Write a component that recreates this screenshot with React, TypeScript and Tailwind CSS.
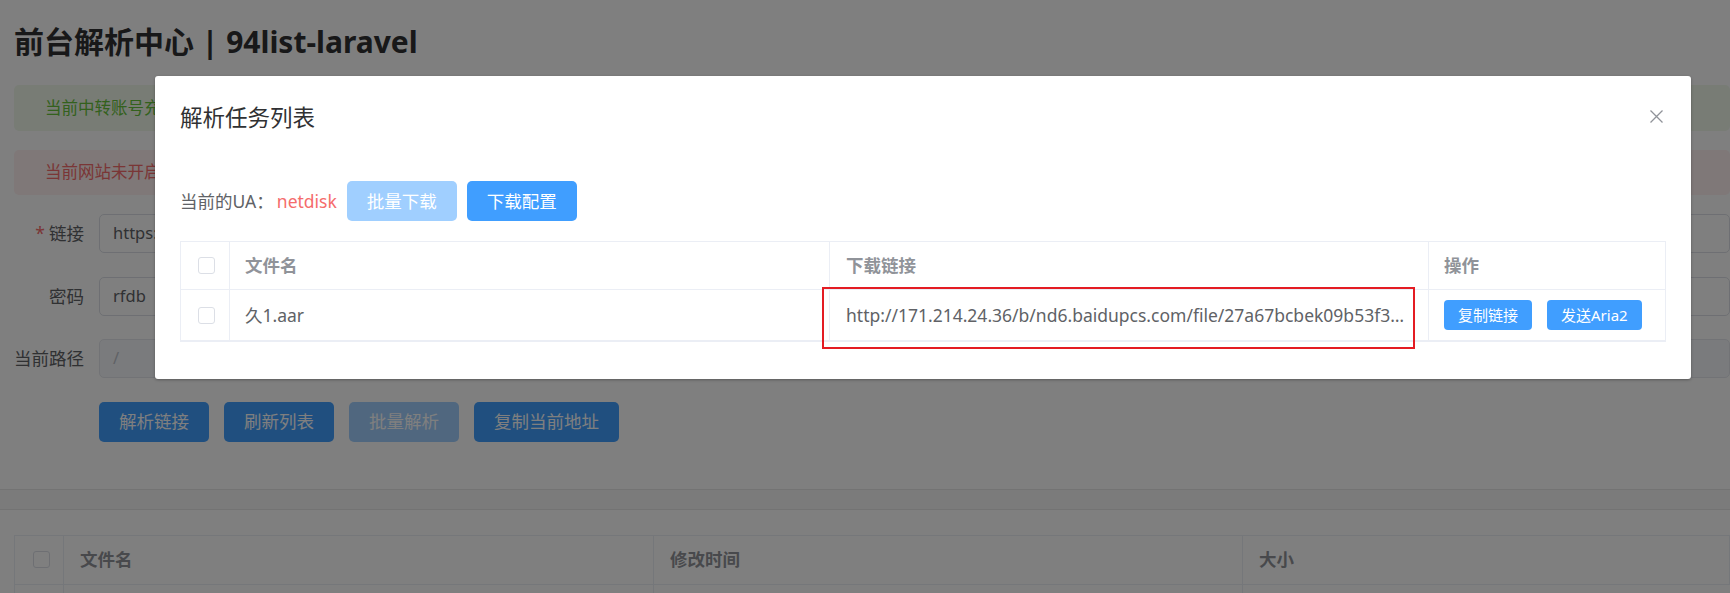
import React from "react";

type Col = { label: string; width: string };

const backCols: Col[] = [
  { label: "文件名", width: "w-[590px]" },
  { label: "修改时间", width: "w-[589px]" },
  { label: "大小", width: "flex-1" },
];

function Box({ className = "" }: { className?: string }) {
  return <span className={`block h-[17px] w-[17px] rounded-[3px] border border-[#dcdfe6] bg-white ${className}`} />;
}

function FormRow({ label, required, children }: { label: string; required?: boolean; children: React.ReactNode }) {
  return (
    <div className="flex h-[39px] items-center">
      <label className="w-[85px] shrink-0 pr-[15px] text-right text-[17.5px] text-[#606266]">
        {required && <span className="mr-[4px] text-[#f56c6c]">*</span>}
        {label}
      </label>
      {children}
    </div>
  );
}

function Page() {
  return (
    <div>
      <div className="pl-[14px] pb-[47px]">
        <h1 className="mt-[22px] h-[40px] text-[30px] font-bold leading-[40px] text-[#303133]">
          前台解析中心 | 94list-laravel
        </h1>

        <div className="mt-[23px] flex h-[46px] items-center rounded-[5px] bg-[#f0f9eb] pl-[31px] text-[16.5px] text-[#67c23a]">
          当前中转账号充足，可正常解析
        </div>
        <div className="mt-[19px] flex h-[45px] items-center rounded-[5px] bg-[#fef0f0] pl-[31px] text-[16.5px] text-[#f56c6c]">
          当前网站未开启卡密验证，请勿泄露网站地址
        </div>

        <div className="mt-[19px] flex flex-col gap-[23.5px]">
          <FormRow label="链接" required>
            <div className="flex h-[39px] flex-1 items-center rounded-[5px] border border-[#dcdfe6] px-[13px] text-[16.5px] text-[#606266]">
              https://pan.baidu.com/s/1xY7kPq2
            </div>
          </FormRow>
          <FormRow label="密码">
            <div className="flex h-[39px] flex-1 items-center rounded-[5px] border border-[#dcdfe6] px-[13px] text-[16.5px] text-[#606266]">
              rfdb
            </div>
          </FormRow>
          <FormRow label="当前路径">
            <div className="flex h-[39px] flex-1 items-center rounded-[5px] border border-[#e4e7ed] bg-[#f5f7fa] px-[13px] text-[16.5px] text-[#c0c4cc]">
              /
            </div>
          </FormRow>
          <div className="flex gap-[15px] pl-[85px]">
            {["解析链接", "刷新列表", "批量解析", "复制当前地址"].map((t) => (
              <button
                key={t}
                className={`h-[40px] rounded-[5px] px-[20px] text-[17.5px] text-white ${t === "批量解析" ? "bg-[#a0cfff]" : "bg-[#409eff]"}`}
              >
                {t}
              </button>
            ))}
          </div>
        </div>
      </div>

      <div className="h-[21px] border-y border-[#e6e6e6] bg-[#f6f6f6]" />

      <div className="pl-[14px] pt-[25px]">
        <div className="border-l border-t border-[#ebeef5]">
          <div className="flex h-[49px] border-b border-[#ebeef5]">
            <div className="flex w-[49px] shrink-0 items-center border-r border-[#ebeef5] pl-[18px]">
              <Box />
            </div>
            {backCols.map((c) => (
              <div
                key={c.label}
                className={`flex ${c.width} shrink-0 items-center border-r border-[#ebeef5] pl-[16px] text-[17.5px] font-bold text-[#909399]`}
              >
                {c.label}
              </div>
            ))}
          </div>
          <div className="flex h-[51px] border-b border-[#ebeef5]">
            <div className="w-[49px] shrink-0 border-r border-[#ebeef5]" />
            <div className="w-[590px] shrink-0 border-r border-[#ebeef5]" />
            <div className="w-[589px] shrink-0 border-r border-[#ebeef5]" />
          </div>
        </div>
      </div>
    </div>
  );
}

function TaskDialog() {
  const url = "http://171.214.24.36/b/nd6.baidupcs.com/file/27a67bcbek09b53f3e6a1d1c4b6fb2a0?bkt=en-2f6a1e&fid=1100443&time=1699999";
  return (
    <div className="absolute left-[155px] top-[76px] w-[1536px] rounded-[3px] bg-white pb-[37px] shadow-[0_1px_3px_rgba(0,0,0,0.3)]">
      <div className="flex items-center justify-between pl-[25px] pr-[28px] pt-[27px]">
        <span className="text-[22.5px] leading-[30px] text-[#303133]">解析任务列表</span>
        <svg width="13" height="13" viewBox="0 0 13 13" className="-mt-[4px]">
          <path d="M0.5 0.5 L12.5 12.5 M12.5 0.5 L0.5 12.5" stroke="#909399" strokeWidth="1.3" fill="none" />
        </svg>
      </div>

      <div className="px-[25px]">
        <div className="mt-[48px] flex h-[40px] items-center text-[17.5px]">
          <span className="text-[#606266]">当前的UA：</span>
          <span className="ml-[3px] text-[#f56c6c]">netdisk</span>
          <button className="ml-[10px] h-[40px] rounded-[5px] bg-[#a0cfff] px-[20px] text-white">批量下载</button>
          <button className="ml-[10px] h-[40px] rounded-[5px] bg-[#409eff] px-[20px] text-white">下载配置</button>
        </div>

        <div className="mt-[20px] border-x border-t border-b-2 border-[#ebeef5] text-[17.5px]">
          <div className="grid h-[48px] grid-cols-[49px_600px_599px_1fr] border-b border-[#ebeef5] font-bold text-[#909399]">
            <div className="flex items-center border-r border-[#ebeef5] pl-[17px]">
              <Box />
            </div>
            <div className="flex items-center border-r border-[#ebeef5] pl-[15px]">文件名</div>
            <div className="flex items-center border-r border-[#ebeef5] pl-[16px]">下载链接</div>
            <div className="flex items-center pl-[15px]">操作</div>
          </div>
          <div className="grid h-[50px] grid-cols-[49px_600px_599px_1fr] text-[#606266]">
            <div className="flex items-center border-r border-[#ebeef5] pl-[17px]">
              <Box />
            </div>
            <div className="flex items-center border-r border-[#ebeef5] pl-[15px]">久1.aar</div>
            <div className="flex min-w-0 items-center border-r border-[#ebeef5] pl-[16px] pr-[20px]">
              <span className="truncate">{url}</span>
            </div>
            <div className="flex items-center gap-[15px] pl-[15px]">
              <button className="h-[30px] rounded-[4px] bg-[#409eff] px-[14px] text-[15px] text-white">复制链接</button>
              <button className="h-[30px] rounded-[4px] bg-[#409eff] px-[14px] text-[15px] text-white">发送Aria2</button>
            </div>
          </div>
        </div>
      </div>

      <div className="pointer-events-none absolute left-[667px] top-[211px] h-[62px] w-[593px] border-2 border-[#e41c23]" />
    </div>
  );
}

export default function App() {
  return (
    <div className="relative h-[593px] w-[1730px] overflow-hidden bg-white font-['Noto_Sans','Noto_Sans_CJK_SC',sans-serif]">
      <Page />
      <div className="absolute inset-0 bg-black/50" />
      <TaskDialog />
    </div>
  );
}
